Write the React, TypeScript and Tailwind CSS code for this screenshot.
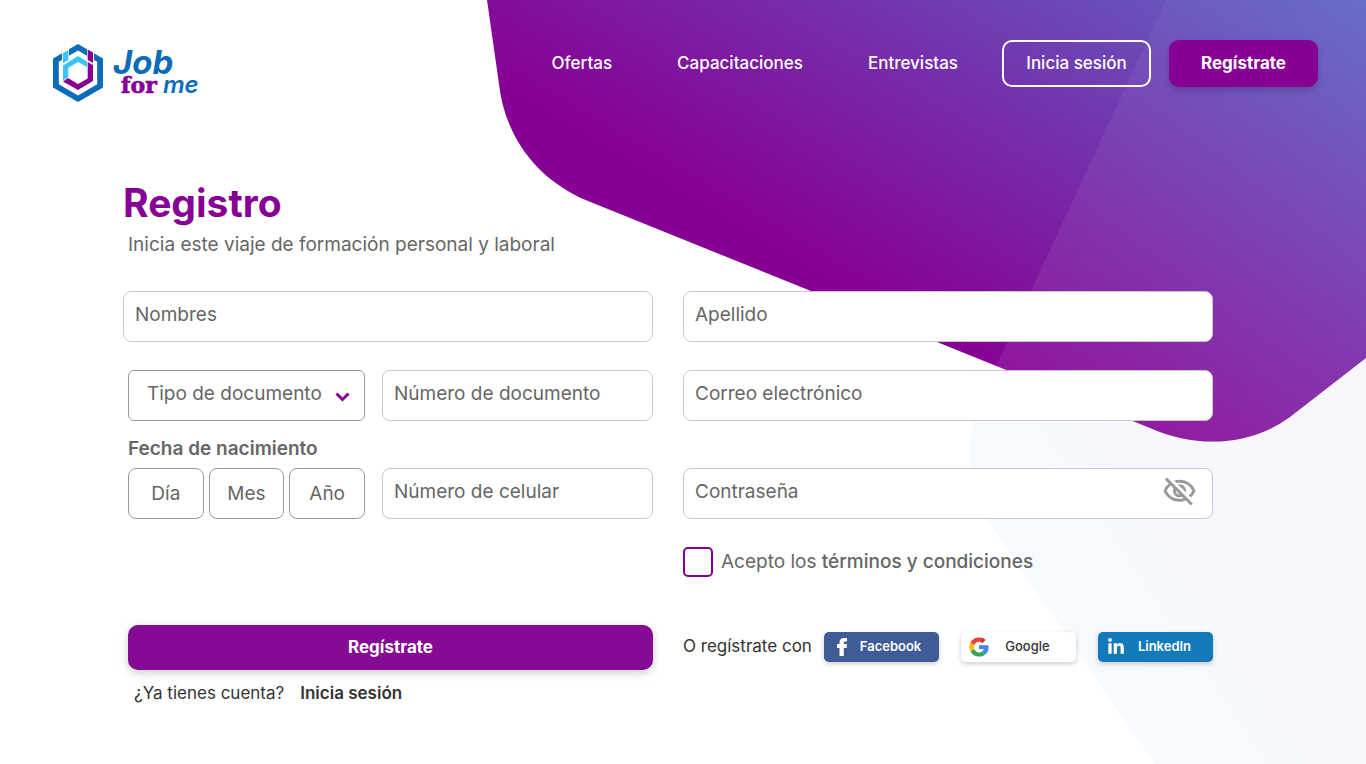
import type { InputHTMLAttributes, ReactNode } from "react";
import { FaLinkedinIn } from "react-icons/fa";
import { MdOutlineVisibilityOff } from "react-icons/md";

function Backdrop() {
  return (
    <svg
      className="pointer-events-none absolute top-0 right-0 -z-10"
      width="900"
      height="764"
      viewBox="466 0 900 764"
      aria-hidden="true"
    >
      <defs>
        <linearGradient id="violet" gradientUnits="userSpaceOnUse" x1="700" y1="197" x2="960" y2="-241">
          <stop offset="0" stopColor="#870094" />
          <stop offset="1" stopColor="#6068c6" />
        </linearGradient>
        <linearGradient id="mist" gradientUnits="userSpaceOnUse" x1="1020" y1="640" x2="1300" y2="450">
          <stop offset="0" stopColor="#f6fbff" />
          <stop offset="1" stopColor="#f7f6fc" />
        </linearGradient>
        <linearGradient id="sheen" x1="0" y1="1" x2="0" y2="0">
          <stop offset="0" stopColor="#ffffff" stopOpacity="0.09" />
          <stop offset="1" stopColor="#ffffff" stopOpacity="0.04" />
        </linearGradient>
        <clipPath id="blob">
          <path d="M487 0L499 84C505 137 537 180 588 201L1150 428C1198 449 1250 446 1290 417L1366 358V0Z" />
        </clipPath>
      </defs>
      <path d="M1155 764L986 518C972 495 966 460 973 420C980 385 1000 350 1040 330L1366 200V764Z" fill="url(#mist)" />
      <g clipPath="url(#blob)">
        <rect x="466" y="0" width="900" height="450" fill="url(#violet)" />
        <path d="M1166 0L960 444H1366V0Z" fill="url(#sheen)" />
      </g>
    </svg>
  );
}

function Logo() {
  return (
    <a href="#inicio" aria-label="Job for me">
      <svg width="160" height="78" viewBox="0 -12 160 78">
        <path
          fill="#0b6cb8"
          fillRule="evenodd"
          d="M25 0L50 14.500V43.500L25 58L0 43.500V14.500ZM25 6.500L5.800 17.700V40.300L25 51.500L44.200 40.300V17.700Z"
        />
        <path fill="#fff" d="M9 5H16V20H9ZM34 4H41V20H34Z" />
        <path fill="#3cc4f7" d="M10 9L15.300 6V16L10 19.200Z" />
        <path fill="#3cc4f7" d="M10 21.500L25 12L34 17.500V23L25 18L15.300 24V33L10 36.500Z" />
        <path fill="#870094" d="M34.700 5.500L40 8.500V19L34.700 16Z" />
        <path fill="#870094" d="M34.700 18L40 21V37L25 46L10 37.500L15 34L25 40L34.700 34.500Z" />
        <text x="60" y="30" fill="#0b6cb8" fontFamily="Inter, sans-serif" fontWeight="700" fontStyle="italic" fontSize="33">
          Job
        </text>
        <text
          x="68"
          y="49"
          fill="#870094"
          stroke="#870094"
          strokeWidth="0.6"
          fontFamily="'DejaVu Serif', serif"
          fontWeight="700"
          fontSize="22"
        >
          for
        </text>
        <text x="110" y="49" fill="#0b6cb8" fontFamily="Inter, sans-serif" fontWeight="600" fontStyle="italic" fontSize="24">
          me
        </text>
      </svg>
    </a>
  );
}

function FacebookMark() {
  return (
    <svg width="12" height="20" viewBox="0 0 12 20" fill="#fff" aria-hidden="true">
      <path d="M3.500 19V11H1V7H3.500V5.500C3.500 2.500 5 1 8 1H11V4.500H9C8 4.500 7.800 5 7.800 5.800V7H11L10.600 11H7.800V19Z" />
    </svg>
  );
}

function GoogleMark() {
  return (
    <svg width="20" height="20" viewBox="0 0 48 48" aria-hidden="true">
      <path fill="#fbbc05" d="M12.500 28.600A12.500 12.500 0 0 1 12.500 19.400L3.600 13.200A23 23 0 0 0 3.600 34.800Z" />
      <path fill="#ea4335" d="M24 11.500C27.500 11.500 30 12.500 32.200 14.500L39.500 7A23 23 0 0 0 3.600 13.200L12.500 19.400C14.400 14.700 18.700 11.500 24 11.500Z" />
      <path fill="#d32f4f" d="M28 12C29.600 12.500 31 13.400 32.200 14.500L39.500 7A23 23 0 0 0 30 1.800Z" />
      <path fill="#34a853" d="M24 47C30.500 47 35.900 45 39.900 41.500L31.500 34.800A12.500 12.500 0 0 1 12.500 28.600L3.600 34.800A23 23 0 0 0 24 47Z" />
      <path fill="#4285f4" d="M47 24.500C47 23 46.800 21 46.500 19.500H24V29H35.500A10 10 0 0 1 31.500 34.800L39.900 41.500C44.500 37.500 47 31.800 47 24.500Z" />
    </svg>
  );
}

type FieldProps = InputHTMLAttributes<HTMLInputElement> & { label: string; look?: string };

function Field({ label, look = "border-[#c8c8c8] px-[11px] pb-1", ...rest }: FieldProps) {
  return (
    <input
      aria-label={label}
      placeholder={label}
      className={`block h-[51px] w-full min-w-0 rounded-lg border bg-white text-[19px] text-[#666666] placeholder:text-[#666666] placeholder:opacity-100 ${look}`}
      {...rest}
    />
  );
}

function SocialButton({ tone, icon, children }: { tone: string; icon: ReactNode; children: ReactNode }) {
  return (
    <button
      type="button"
      className={`flex h-[30px] w-[115px] items-center rounded-[5px] pl-2 text-[13px] shadow-[0_2px_5px_rgba(0,0,0,0.2)] ${tone}`}
    >
      <span className="flex w-5 justify-center">{icon}</span>
      <span className="flex-1 pr-4 pl-1.5 text-center">{children}</span>
    </button>
  );
}

export default function App() {
  return (
    <div className="relative isolate min-h-screen overflow-hidden bg-white font-['Inter','Open_Sans',sans-serif] text-[#666666]">
      <Backdrop />
      <header className="flex items-start justify-between pr-12 pl-[53px]">
        <div className="pt-8">
          <Logo />
        </div>
        <div className="flex items-center gap-11 pt-10 text-[17px] font-medium text-white">
          <nav className="flex gap-[65px]">
            <a href="#ofertas">Ofertas</a>
            <a href="#capacitaciones">Capacitaciones</a>
            <a href="#entrevistas">Entrevistas</a>
          </nav>
          <div className="flex gap-[18px]">
            <button type="button" className="h-[47px] w-[149px] rounded-[10px] border-2 border-white">
              Inicia sesión
            </button>
            <button
              type="button"
              className="h-[47px] w-[149px] rounded-[10px] bg-[#870094] font-bold shadow-[0_3px_6px_rgba(0,0,0,0.2)]"
            >
              Regístrate
            </button>
          </div>
        </div>
      </header>

      <main className="pt-[69px] pr-[153px] pb-10 pl-[123px]">
        <h1 className="text-[39px] leading-[48px] font-bold text-[#870094]">Registro</h1>
        <p className="mt-1 pl-[5px] text-[19px] leading-7">Inicia este viaje de formación personal y laboral</p>

        <form className="mt-8" onSubmit={(event) => event.preventDefault()}>
          <div className="grid grid-cols-2 gap-x-[30px]">
            <div>
              <Field label="Nombres" name="nombres" />
              <div className="mt-7 grid grid-cols-[237fr_271fr] gap-x-[17px] pl-[5px]">
                <div className="relative">
                  <select
                    aria-label="Tipo de documento"
                    className="block h-[51px] w-full appearance-none rounded-md border border-[#999999] bg-white pb-[3px] pl-[18px] text-[19px]"
                  >
                    <option>Tipo de documento</option>
                  </select>
                  <svg
                    className="pointer-events-none absolute top-[21px] right-[15px]"
                    width="15"
                    height="12"
                    viewBox="0 0 15 12"
                    fill="none"
                    stroke="#870094"
                    strokeWidth="3"
                    aria-hidden="true"
                  >
                    <path d="M1.500 2.500L7.500 8.500L13.500 2.500" />
                  </svg>
                </div>
                <Field label="Número de documento" name="documento" />
              </div>
              <div className="mt-4 grid grid-cols-[237fr_271fr] items-end gap-x-[17px] pl-[5px]">
                <fieldset>
                  <legend className="mb-[7px] text-[19px] leading-6 font-semibold">Fecha de nacimiento</legend>
                  <div className="grid grid-cols-3 gap-[5px]">
                    <Field label="Día" look="border-[#999999] text-center" />
                    <Field label="Mes" look="border-[#999999] text-center" />
                    <Field label="Año" look="border-[#999999] text-center" />
                  </div>
                </fieldset>
                <Field label="Número de celular" name="celular" type="tel" />
              </div>
            </div>

            <div>
              <Field label="Apellido" name="apellido" />
              <div className="mt-7">
                <Field label="Correo electrónico" name="correo" type="email" />
              </div>
              <div className="relative mt-[47px]">
                <Field label="Contraseña" name="clave" type="password" />
                <button type="button" aria-label="Mostrar contraseña" className="absolute top-[6px] right-4 text-[#999999]">
                  <MdOutlineVisibilityOff size={35} />
                </button>
              </div>
              <label className="mt-7 flex items-center gap-2 text-[19px] leading-[30px]">
                <input
                  type="checkbox"
                  className="size-[30px] appearance-none rounded-[5px] border-2 border-[#870094] bg-white checked:bg-[#870094]"
                />
                <span>
                  Acepto los <span className="font-medium">términos y condiciones</span>
                </span>
              </label>
            </div>
          </div>

          <div className="mt-12 grid grid-cols-2 gap-x-[30px] text-[17px] text-[#333333]">
            <div className="pl-[5px]">
              <button
                type="submit"
                className="h-[45px] w-full rounded-[10px] bg-[#850a94] font-bold text-white shadow-[0_3px_10px_rgba(0,0,0,0.2)]"
              >
                Regístrate
              </button>
              <p className="mt-[11px] flex gap-4 pl-[6px] leading-6">
                <span>¿Ya tienes cuenta?</span>
                <a href="#sesion" className="font-semibold">
                  Inicia sesión
                </a>
              </p>
            </div>
            <div className="flex h-[43px] items-center justify-between">
              <span>O regístrate con</span>
              <div className="flex gap-[22px]">
                <SocialButton tone="bg-[#3f5b98] text-white font-semibold" icon={<FacebookMark />}>
                  Facebook
                </SocialButton>
                <SocialButton tone="bg-white text-[#333333] font-medium" icon={<GoogleMark />}>
                  Google
                </SocialButton>
                <SocialButton tone="bg-[#127ab8] text-white font-semibold" icon={<FaLinkedinIn size={18} />}>
                  LinkedIn
                </SocialButton>
              </div>
            </div>
          </div>
        </form>
      </main>
    </div>
  );
}
